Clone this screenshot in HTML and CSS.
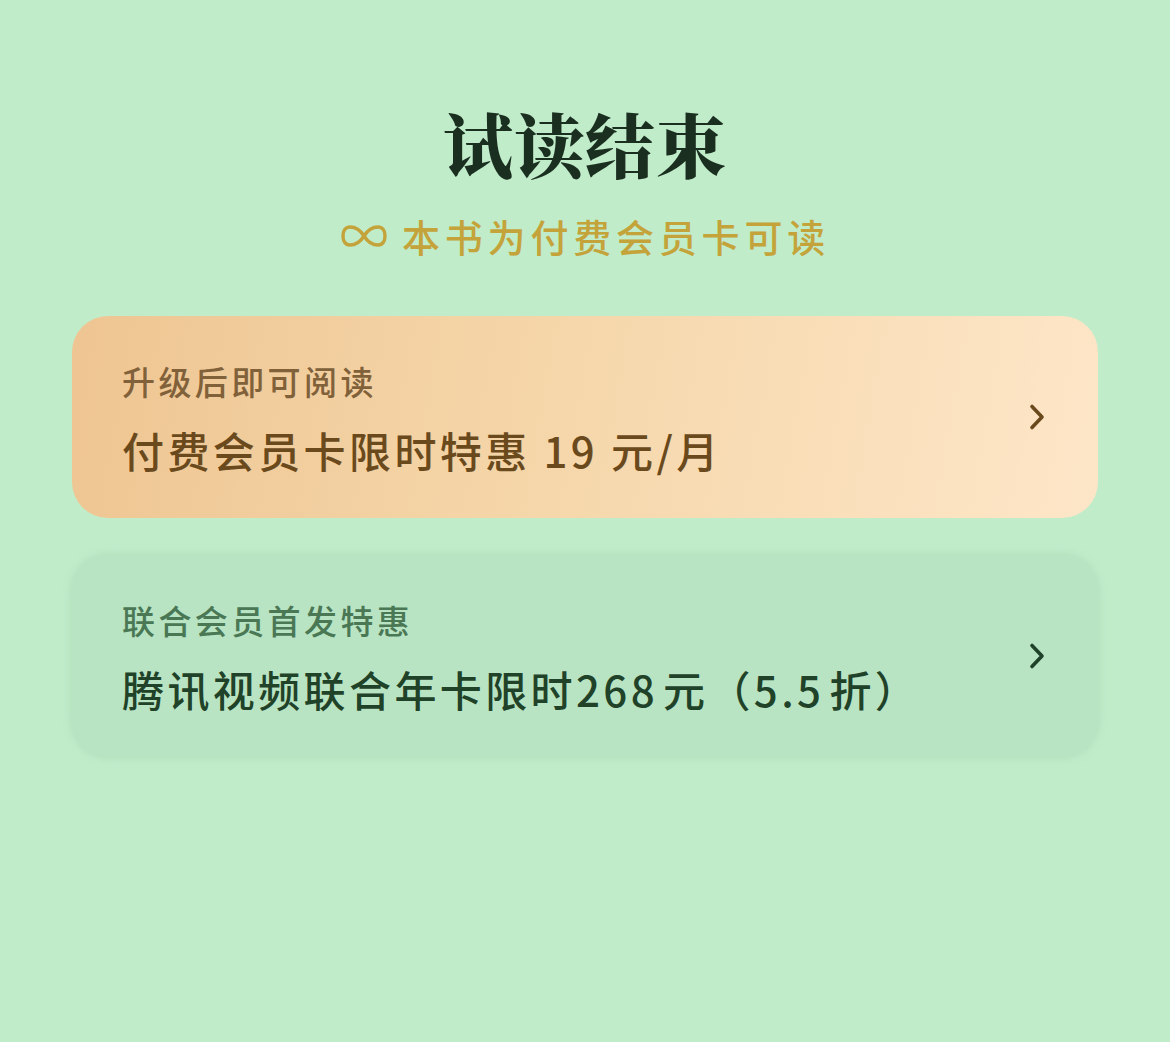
FILE: index.html
```html
<!DOCTYPE html>
<html lang="zh-CN">
<head>
<meta charset="utf-8">
<title>试读结束</title>
<link rel="stylesheet" href="styles.css">
</head>
<body>
<main class="page">
  <h1 class="title">试读结束</h1>
  <p class="subtitle">
    <svg class="infinity" viewBox="0 0 48 26" width="48" height="26" aria-hidden="true">
      <path d="M24 13 C19 5 14 4 10 4 C5 4 3 8.5 3 13 C3 17.5 5 22 10 22 C14 22 19 21 24 13 C29 5 34 4 38 4 C43 4 45 8.5 45 13 C45 17.5 43 22 38 22 C34 22 29 21 24 13 Z" fill="none" stroke="currentColor" stroke-width="3.4" stroke-linejoin="round"/>
    </svg>
    <span>本书为付费会员卡可读</span>
  </p>

  <a class="card card-gold" href="#">
    <div class="card-text">
      <div class="card-sub">升级后即可阅读</div>
      <div class="card-main">付费会员卡限时特惠 19 元/月</div>
    </div>
    <svg class="chev" viewBox="0 0 18 28" width="18" height="28" aria-hidden="true">
      <polyline points="4,3.5 14,14 4,24.5" fill="none" stroke="currentColor" stroke-width="3.6" stroke-linecap="round" stroke-linejoin="round"/>
    </svg>
  </a>

  <a class="card card-green" href="#">
    <div class="card-text">
      <div class="card-sub">联合会员首发特惠</div>
      <div class="card-main">腾讯视频联合年卡限时268<span class="gap"></span>元（5.5<span class="gap"></span>折）</div>
    </div>
    <svg class="chev" viewBox="0 0 18 28" width="18" height="28" aria-hidden="true">
      <polyline points="4,3.5 14,14 4,24.5" fill="none" stroke="currentColor" stroke-width="3.6" stroke-linecap="round" stroke-linejoin="round"/>
    </svg>
  </a>
</main>
</body>
</html>
```

FILE: styles.css
```css
html, body {
  margin: 0;
  padding: 0;
}

body {
  background: #c0ecca;
  width: 1170px;
  height: 1042px;
  overflow: hidden;
  font-family: "Noto Sans CJK SC", "Noto Sans", sans-serif;
}

.page {
  padding: 100px 72px 0 72px;
  display: flex;
  flex-direction: column;
}

.title {
  margin: 0;
  text-align: center;
  font-family: "Noto Serif CJK SC", "Noto Serif SC", "Noto Sans CJK SC", serif;
  font-weight: 900;
  font-size: 70px;
  line-height: 86px;
  letter-spacing: 1px;
  color: #1b2f20;
}

.subtitle {
  margin: 26px 0 0 0;
  height: 48px;
  display: flex;
  align-items: center;
  justify-content: center;
  gap: 14px;
  color: #c4a43a;
  font-size: 38px;
  font-weight: 500;
  letter-spacing: 4.8px;
  line-height: 48px;
}

.infinity {
  display: block;
  flex: none;
}

.card {
  display: flex;
  align-items: center;
  justify-content: space-between;
  height: 202px;
  box-sizing: border-box;
  padding: 0 52px 0 50px;
  border-radius: 36px;
  text-decoration: none;
}

.card-gold {
  margin-top: 56px;
  background: linear-gradient(100deg, #eec592 0%, #f5d6a9 45%, #fde6c8 100%);
  color: #6a4a1d;
}

.card-green {
  margin-top: 37px;
  background: #b8e4c3;
  box-shadow: 0 0 6px 2px rgba(170, 215, 180, 0.55);
  color: #1f4228;
}

.card-text {
  display: flex;
  flex-direction: column;
  gap: 24px;
  padding-top: 2px;
}

.card-sub {
  font-size: 33px;
  line-height: 40px;
  font-weight: 500;
  letter-spacing: 3.4px;
}

.card-gold .card-sub {
  color: #80613a;
}

.card-green .card-sub {
  color: #4a7855;
}

.card-main {
  font-size: 42px;
  line-height: 50px;
  font-weight: 500;
  letter-spacing: 3.4px;
}

.gap {
  display: inline-block;
  width: 5px;
}

.chev {
  display: block;
  flex: none;
}
```
